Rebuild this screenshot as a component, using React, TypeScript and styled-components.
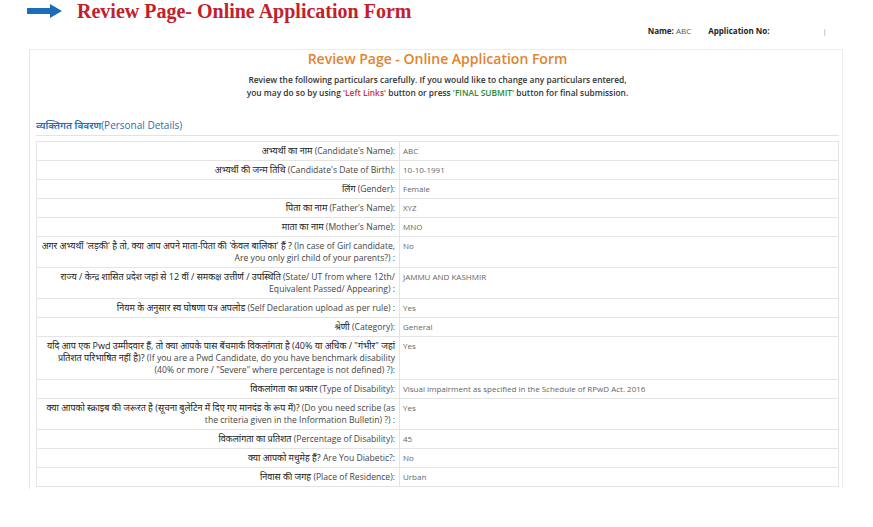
import React from 'react';
import styled, { createGlobalStyle } from 'styled-components';

const GlobalStyle = createGlobalStyle`
  html, body {
    margin: 0;
    padding: 0;
    background: #fff;
  }
  body {
    font-family: 'Open Sans', 'Noto Sans Devanagari', 'Noto Sans', sans-serif;
    color: #333;
  }
`;

type Item = { hi: string; en: string; value: string };

const rows: Item[] = [
  { hi: 'अभ्यर्थी का नाम', en: "(Candidate's Name):", value: 'ABC' },
  { hi: 'अभ्यर्थी की जन्म तिथि', en: "(Candidate's Date of Birth):", value: '10-10-1991' },
  { hi: 'लिंग', en: '(Gender):', value: 'Female' },
  { hi: 'पिता का नाम', en: "(Father's Name):", value: 'XYZ' },
  { hi: 'माता का नाम', en: "(Mother's Name):", value: 'MNO' },
  {
    hi: "अगर अभ्यर्थी 'लड़की' है तो, क्या आप अपने माता-पिता की 'केवल बालिका' हैं ?",
    en: '(In case of Girl candidate, Are you only girl child of your parents?) :',
    value: 'No',
  },
  {
    hi: 'राज्य / केन्द्र शासित प्रदेश जहां से 12 वीं / समकक्ष उत्तीर्ण / उपस्थिति',
    en: '(State/ UT from where 12th/ Equivalent Passed/ Appearing) :',
    value: 'JAMMU AND KASHMIR',
  },
  { hi: 'नियम के अनुसार स्व घोषणा पत्र अपलोड', en: '(Self Declaration upload as per rule) :', value: 'Yes' },
  { hi: 'श्रेणी', en: '(Category):', value: 'General' },
  {
    hi: 'यदि आप एक Pwd उम्मीदवार हैं, तो क्या आपके पास बेंचमार्क विकलांगता है (40% या अधिक / "गंभीर" जहां प्रतिशत परिभाषित नहीं है)?',
    en: '(If you are a Pwd Candidate, do you have benchmark disability (40% or more / "Severe" where percentage is not defined) ?):',
    value: 'Yes',
  },
  {
    hi: 'विकलांगता का प्रकार',
    en: '(Type of Disability):',
    value: 'Visual impairment as specified in the Schedule of RPwD Act. 2016',
  },
  {
    hi: 'क्या आपको स्क्राइब की जरूरत है (सूचना बुलेटिन में दिए गए मानदंड के रूप में)?',
    en: '(Do you need scribe (as the criteria given in the Information Bulletin) ?) :',
    value: 'Yes',
  },
  { hi: 'विकलांगता का प्रतिशत', en: '(Percentage of Disability):', value: '45' },
  { hi: 'क्या आपको मधुमेह हैं?', en: 'Are You Diabetic?:', value: 'No' },
  { hi: 'निवास की जगह', en: '(Place of Residence):', value: 'Urban' },
];

const Arrow = () => (
  <svg width="35" height="14" viewBox="0 0 35 14">
    <path d="M0 4 H23 V0 L35 7 L23 14 V10 H0 Z" fill="#1b6db8" />
  </svg>
);

const App = () => {
  return (
    <>
      <GlobalStyle />
      <Page>
        <TitleBar>
          <Arrow />
          <BigTitle>Review Page- Online Application Form</BigTitle>
        </TitleBar>
        <UserBar>
          <UserInfo>
            <b>Name:</b> ABC
          </UserInfo>
          <UserInfo>
            <b>Application No:</b>
          </UserInfo>
          <Divider>|</Divider>
        </UserBar>
        <Panel>
          <Heading>Review Page - Online Application Form</Heading>
          <Lead>
            Review the following particulars carefully. If you would like to change any particulars entered,
            <br />
            you may do so by using <Red>'Left Links'</Red> button or press <Green>'FINAL SUBMIT'</Green> button
            for final submission.
          </Lead>
          <SectionTitle>
            <strong>व्यक्तिगत विवरण</strong>(Personal Details)
          </SectionTitle>
          <Table>
            <tbody>
              {rows.map((r, i) => (
                <Row key={i}>
                  <LabelCell>
                    <Hindi>{r.hi}</Hindi> {r.en}
                  </LabelCell>
                  <ValueCell>{r.value}</ValueCell>
                </Row>
              ))}
            </tbody>
          </Table>
        </Panel>
      </Page>
    </>
  );
};

export default App;

const Page = styled.div`
  width: 873px;
  height: 527px;
  overflow: hidden;
`;

const TitleBar = styled.div`
  display: flex;
  align-items: center;
  gap: 15px;
  height: 22px;
  padding-left: 27px;
`;

const BigTitle = styled.h1`
  margin: 0;
  font-family: 'Liberation Serif', 'Times New Roman', serif;
  font-size: 20px;
  font-weight: bold;
  color: #c3202a;
  line-height: 1;
`;

const UserBar = styled.div`
  display: flex;
  align-items: center;
  justify-content: flex-end;
  width: 814px;
  margin-left: 29px;
  height: 27px;
  padding: 0 16px 10px 0;
  box-sizing: border-box;
  font-size: 8px;
  color: #555;
`;

const UserInfo = styled.span`
  margin-left: 17px;
  b {
    color: #222;
    font-weight: 700;
  }
`;

const Divider = styled.span`
  margin-left: 53px;
  color: #999;
`;

const Panel = styled.div`
  width: 814px;
  margin-left: 29px;
  box-sizing: border-box;
  border-top: 1px solid #ececec;
  border-left: 1px solid #e6e6e6;
  border-right: 1px solid #ececec;
  padding: 0 3px 0 6px;
  height: 440px;
`;

const Heading = styled.h2`
  margin: 0;
  text-align: center;
  font-size: 14px;
  font-weight: 600;
  color: #e2832d;
  line-height: 18px;
`;

const Lead = styled.p`
  margin: 5px 0 0;
  text-align: center;
  font-size: 8.4px;
  font-weight: 600;
  line-height: 13px;
  color: #333;
`;

const Red = styled.span`
  color: #d12f3a;
`;

const Green = styled.span`
  color: #2b8a2b;
`;

const SectionTitle = styled.h3`
  margin: 19px 0 0;
  padding-bottom: 3px;
  border-bottom: 1px solid #e3e3e3;
  font-size: 10px;
  font-weight: 400;
  color: #2a6db1;
  line-height: 14px;
  strong {
    font-weight: 600;
  }
`;

const Table = styled.table`
  width: 803px;
  margin-top: 5px;
  border-collapse: collapse;
  font-size: 8px;
  line-height: 12px;
`;

const Row = styled.tr`
  border: 1px solid #e4e4e4;
`;

const LabelCell = styled.td`
  width: 354px;
  padding: 3px 4px 3px 4px;
  text-align: right;
  vertical-align: top;
  font-size: 8.6px;
  color: #444;
  border-right: 1px solid #e4e4e4;
`;

const Hindi = styled.span`
  font-size: 9px;
  line-height: 1;
  color: #222;
`;

const ValueCell = styled.td`
  padding: 3px 3px;
  vertical-align: top;
  color: #666;
`;
